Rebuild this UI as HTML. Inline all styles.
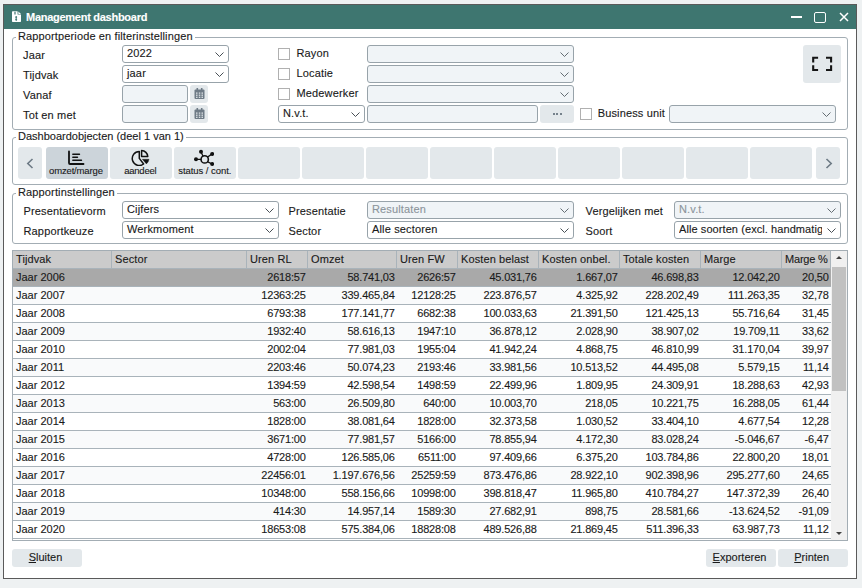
<!DOCTYPE html>
<html><head><meta charset="utf-8"><style>
html,body{margin:0;padding:0;width:862px;height:588px;overflow:hidden;background:#eef1f2}
body{position:relative;font-family:"Liberation Sans", sans-serif}
body>div{position:absolute}
.t{white-space:nowrap;-webkit-text-stroke:0.12px currentColor}
u{text-decoration:underline;text-underline-offset:1px}
</style></head><body>
<div style="left:0;top:0;width:862px;height:588px;background:#eef1f2"></div>
<div style="left:3px;top:4px;width:854px;height:575px;box-sizing:border-box;border:1px solid #5a5a5a;background:#fff"></div>
<div style="left:4px;top:5px;width:852px;height:24px;background:#3e7670"></div>
<svg width="10" height="12" viewBox="0 0 10 12" style="position:absolute;left:12px;top:11px"><path d="M0 1 Q0 0.3 0.7 0.3 L5.6 0.3 L5.6 3.5 L9 3.5 L9 10.2 Q9 10.9 8.3 10.9 L0.7 10.9 Q0 10.9 0 10.2 Z" fill="#fff"/><path d="M6.4 0.4 L9 3 L6.4 3 Z" fill="#fff"/><path d="M3 0.8 V3.6" stroke="#3e7670" stroke-width="1.2" fill="none"/><path d="M4.2 5 V10 M3.3 6.2 H5.1 M3.3 8.4 H5.1" stroke="#3e7670" stroke-width="1" fill="none"/></svg>
<div class="t" style="left:26px;top:11.19px;font-size:11px;line-height:13px;color:#ffffff;font-weight:bold;letter-spacing:-0.27px">Management dashboard</div>
<div style="left:791px;top:16.4px;width:10.5px;height:1.5px;background:#fff"></div>
<div style="left:814px;top:12px;width:12px;height:11px;box-sizing:border-box;border:1.5px solid #fff;border-radius:2px"></div>
<svg width="10" height="10" viewBox="0 0 10 10" style="position:absolute;left:839px;top:12px"><path d="M1 1 L9 9 M9 1 L1 9" stroke="#fff" stroke-width="1.5"/></svg>
<div style="left:12px;top:37px;width:836px;height:93px;box-sizing:border-box;border:1px solid #a3adb4;border-radius:3px"></div>
<div style="left:16px;top:36px;width:179px;height:3px;background:#fff"></div>
<div class="t" style="left:18px;top:29.69px;font-size:11px;line-height:13px;color:#1a1a1a;letter-spacing:0.13px">Rapportperiode en filterinstellingen</div>
<div class="t" style="left:23px;top:48.69px;font-size:11px;line-height:13px;color:#1a1a1a;letter-spacing:0.15px;">Jaar</div>
<div class="t" style="left:23px;top:68.69px;font-size:11px;line-height:13px;color:#1a1a1a;letter-spacing:0.15px;">Tijdvak</div>
<div class="t" style="left:23px;top:88.69px;font-size:11px;line-height:13px;color:#1a1a1a;letter-spacing:0.15px;">Vanaf</div>
<div class="t" style="left:23px;top:108.69px;font-size:11px;line-height:13px;color:#1a1a1a;letter-spacing:0.15px;">Tot en met</div>
<div style="left:122px;top:45px;width:107px;height:18px;box-sizing:border-box;border:1px solid #98a3aa;border-radius:3px;background:#ffffff"></div>
<svg width="9" height="5" viewBox="0 0 9 5" style="position:absolute;left:215px;top:52px"><path d="M0.5 0.5 L4.5 4.5 L8.5 0.5" fill="none" stroke="#474f55" stroke-width="1"/></svg>
<div class="t" style="left:127px;top:46.69px;font-size:11px;line-height:13px;color:#1a1a1a;letter-spacing:0.15px;">2022</div>
<div style="left:122px;top:65px;width:107px;height:18px;box-sizing:border-box;border:1px solid #98a3aa;border-radius:3px;background:#ffffff"></div>
<svg width="9" height="5" viewBox="0 0 9 5" style="position:absolute;left:215px;top:72px"><path d="M0.5 0.5 L4.5 4.5 L8.5 0.5" fill="none" stroke="#474f55" stroke-width="1"/></svg>
<div class="t" style="left:127px;top:66.69px;font-size:11px;line-height:13px;color:#1a1a1a;letter-spacing:0.15px;">jaar</div>
<div style="left:122px;top:85px;width:66px;height:18px;box-sizing:border-box;border:1px solid #98a3aa;border-radius:3px;background:#f0f4f7"></div>
<div style="left:190px;top:85px;width:18px;height:18px;background:#e3e8eb;border-radius:3px"></div>
<svg width="11" height="11" viewBox="0 0 11 11" style="position:absolute;left:194px;top:88px"><rect x="0.5" y="1.5" width="10" height="9.5" rx="1" fill="#6e7b86"/><rect x="2.5" y="0" width="1.6" height="3" fill="#6e7b86"/><rect x="6.9" y="0" width="1.6" height="3" fill="#6e7b86"/><g fill="#e3e8eb"><rect x="2" y="4.5" width="1.5" height="1.2"/><rect x="4.8" y="4.5" width="1.5" height="1.2"/><rect x="7.5" y="4.5" width="1.5" height="1.2"/><rect x="2" y="6.6" width="1.5" height="1.2"/><rect x="4.8" y="6.6" width="1.5" height="1.2"/><rect x="7.5" y="6.6" width="1.5" height="1.2"/><rect x="2" y="8.7" width="1.5" height="1.2"/><rect x="4.8" y="8.7" width="1.5" height="1.2"/><rect x="7.5" y="8.7" width="1.5" height="1.2"/></g></svg>
<div style="left:122px;top:105px;width:66px;height:18px;box-sizing:border-box;border:1px solid #98a3aa;border-radius:3px;background:#f0f4f7"></div>
<div style="left:190px;top:105px;width:18px;height:18px;background:#e3e8eb;border-radius:3px"></div>
<svg width="11" height="11" viewBox="0 0 11 11" style="position:absolute;left:194px;top:108px"><rect x="0.5" y="1.5" width="10" height="9.5" rx="1" fill="#6e7b86"/><rect x="2.5" y="0" width="1.6" height="3" fill="#6e7b86"/><rect x="6.9" y="0" width="1.6" height="3" fill="#6e7b86"/><g fill="#e3e8eb"><rect x="2" y="4.5" width="1.5" height="1.2"/><rect x="4.8" y="4.5" width="1.5" height="1.2"/><rect x="7.5" y="4.5" width="1.5" height="1.2"/><rect x="2" y="6.6" width="1.5" height="1.2"/><rect x="4.8" y="6.6" width="1.5" height="1.2"/><rect x="7.5" y="6.6" width="1.5" height="1.2"/><rect x="2" y="8.7" width="1.5" height="1.2"/><rect x="4.8" y="8.7" width="1.5" height="1.2"/><rect x="7.5" y="8.7" width="1.5" height="1.2"/></g></svg>
<div style="left:278px;top:48px;width:12px;height:12px;box-sizing:border-box;border:1px solid #b0b0b0;background:#fff"></div>
<div class="t" style="left:296.5px;top:46.69px;font-size:11px;line-height:13px;color:#1a1a1a;letter-spacing:0.15px;">Rayon</div>
<div style="left:367px;top:45px;width:207px;height:18px;box-sizing:border-box;border:1px solid #98a3aa;border-radius:3px;background:#f0f4f7"></div>
<svg width="9" height="5" viewBox="0 0 9 5" style="position:absolute;left:560px;top:52px"><path d="M0.5 0.5 L4.5 4.5 L8.5 0.5" fill="none" stroke="#646d73" stroke-width="1"/></svg>
<div style="left:278px;top:68px;width:12px;height:12px;box-sizing:border-box;border:1px solid #b0b0b0;background:#fff"></div>
<div class="t" style="left:296.5px;top:66.69px;font-size:11px;line-height:13px;color:#1a1a1a;letter-spacing:0.15px;">Locatie</div>
<div style="left:367px;top:65px;width:207px;height:18px;box-sizing:border-box;border:1px solid #98a3aa;border-radius:3px;background:#f0f4f7"></div>
<svg width="9" height="5" viewBox="0 0 9 5" style="position:absolute;left:560px;top:72px"><path d="M0.5 0.5 L4.5 4.5 L8.5 0.5" fill="none" stroke="#646d73" stroke-width="1"/></svg>
<div style="left:278px;top:88px;width:12px;height:12px;box-sizing:border-box;border:1px solid #b0b0b0;background:#fff"></div>
<div class="t" style="left:296.5px;top:86.69px;font-size:11px;line-height:13px;color:#1a1a1a;letter-spacing:0.15px;">Medewerker</div>
<div style="left:367px;top:85px;width:207px;height:18px;box-sizing:border-box;border:1px solid #98a3aa;border-radius:3px;background:#f0f4f7"></div>
<svg width="9" height="5" viewBox="0 0 9 5" style="position:absolute;left:560px;top:92px"><path d="M0.5 0.5 L4.5 4.5 L8.5 0.5" fill="none" stroke="#646d73" stroke-width="1"/></svg>
<div style="left:278px;top:105px;width:87px;height:18px;box-sizing:border-box;border:1px solid #98a3aa;border-radius:3px;background:#ffffff"></div>
<svg width="9" height="5" viewBox="0 0 9 5" style="position:absolute;left:351px;top:112px"><path d="M0.5 0.5 L4.5 4.5 L8.5 0.5" fill="none" stroke="#474f55" stroke-width="1"/></svg>
<div class="t" style="left:283px;top:106.69px;font-size:11px;line-height:13px;color:#1a1a1a;letter-spacing:0.15px;">N.v.t.</div>
<div style="left:367px;top:105px;width:171px;height:18px;box-sizing:border-box;border:1px solid #98a3aa;border-radius:3px;background:#f0f4f7"></div>
<div style="left:540px;top:105px;width:34px;height:18px;background:#e3e8eb;border-radius:3px"></div>
<div style="left:552.8px;top:112.8px;width:2px;height:2px;background:#75818b"></div><div style="left:556.3px;top:112.8px;width:2px;height:2px;background:#75818b"></div><div style="left:559.9px;top:112.8px;width:2px;height:2px;background:#75818b"></div>
<div style="left:580px;top:108px;width:12px;height:12px;box-sizing:border-box;border:1px solid #b0b0b0;background:#fff"></div>
<div class="t" style="left:597.7px;top:106.69px;font-size:11px;line-height:13px;color:#1a1a1a;letter-spacing:0.15px;">Business unit</div>
<div style="left:669px;top:105px;width:167px;height:18px;box-sizing:border-box;border:1px solid #98a3aa;border-radius:3px;background:#f0f4f7"></div>
<svg width="9" height="5" viewBox="0 0 9 5" style="position:absolute;left:822px;top:112px"><path d="M0.5 0.5 L4.5 4.5 L8.5 0.5" fill="none" stroke="#646d73" stroke-width="1"/></svg>
<div style="left:803px;top:45px;width:38px;height:38px;background:#e3e8eb;border-radius:3px"></div>
<svg width="30" height="22" viewBox="806 52 30 22" style="position:absolute;left:806px;top:52px"><path d="M813.2 62.6 V57.7 H818.1 M826 57.7 H831.1 V62.6 M813.2 65.2 V70 H818.1 M826 70 H831.1 V65.2" fill="none" stroke="#151515" stroke-width="2.1" stroke-linecap="butt" stroke-linejoin="miter"/></svg>
<div style="left:12px;top:137px;width:836px;height:48px;box-sizing:border-box;border:1px solid #a3adb4;border-radius:3px"></div>
<div style="left:16px;top:136px;width:170px;height:3px;background:#fff"></div>
<div class="t" style="left:18px;top:129.69px;font-size:11px;line-height:13px;color:#1a1a1a;letter-spacing:0px">Dashboardobjecten (deel 1 van 1)</div>
<div style="left:18px;top:147px;width:24px;height:32px;background:#e3e8eb;border-radius:3px"></div>
<svg width="8" height="11" viewBox="0 0 8 11" style="position:absolute;left:26px;top:157.6px"><path d="M6.5 1 L1.8 5.5 L6.5 10" fill="none" stroke="#6d7a85" stroke-width="1.6"/></svg>
<div style="left:46px;top:147px;width:62px;height:32px;background:#ccd4da;border-radius:3px"></div>
<div style="left:110px;top:147px;width:62px;height:32px;background:#e3e8eb;border-radius:3px"></div>
<div style="left:174px;top:147px;width:62px;height:32px;background:#e3e8eb;border-radius:3px"></div>
<div style="left:238px;top:147px;width:62px;height:32px;background:#e3e8eb;border-radius:3px"></div>
<div style="left:302px;top:147px;width:62px;height:32px;background:#e3e8eb;border-radius:3px"></div>
<div style="left:366px;top:147px;width:62px;height:32px;background:#e3e8eb;border-radius:3px"></div>
<div style="left:430px;top:147px;width:62px;height:32px;background:#e3e8eb;border-radius:3px"></div>
<div style="left:494px;top:147px;width:62px;height:32px;background:#e3e8eb;border-radius:3px"></div>
<div style="left:558px;top:147px;width:62px;height:32px;background:#e3e8eb;border-radius:3px"></div>
<div style="left:622px;top:147px;width:62px;height:32px;background:#e3e8eb;border-radius:3px"></div>
<div style="left:686px;top:147px;width:62px;height:32px;background:#e3e8eb;border-radius:3px"></div>
<div style="left:750px;top:147px;width:62px;height:32px;background:#e3e8eb;border-radius:3px"></div>
<div style="left:816px;top:147px;width:24px;height:32px;background:#e3e8eb;border-radius:3px"></div>
<svg width="8" height="11" viewBox="0 0 8 11" style="position:absolute;left:825px;top:157.6px"><path d="M1.5 1 L6.2 5.5 L1.5 10" fill="none" stroke="#6d7a85" stroke-width="1.6"/></svg>
<svg width="20" height="18" viewBox="0 0 20 18" style="position:absolute;left:66px;top:149px"><path d="M3 2.5 V14 Q3 15 4 15 H17.5" fill="none" stroke="#111" stroke-width="1.8" stroke-linecap="round"/><path d="M6.8 5.3 H13.5 M6.8 8.2 H11.5 M6.8 11.2 H15.5" fill="none" stroke="#111" stroke-width="1.4" stroke-linecap="round"/></svg>
<svg width="20" height="18" viewBox="0 0 20 18" style="position:absolute;left:130px;top:148px"><path d="M9.3 3.5 A7 7 0 1 0 13.6 16 L9.3 10.4 Z" fill="none" stroke="#111" stroke-width="1.5" stroke-linejoin="round"/><path d="M11.6 2.6 A6.3 6.3 0 0 1 17.8 8.6 L11.6 8.6 Z" fill="none" stroke="#111" stroke-width="1.5" stroke-linejoin="round"/><path d="M12.3 11.2 L19.1 11.2 Q18.7 14 16.4 15.9 Z" fill="#111" stroke="#111" stroke-width="0.3" stroke-linejoin="round"/></svg>
<svg width="22" height="18" viewBox="0 0 22 18" style="position:absolute;left:192px;top:148px"><circle cx="12.7" cy="11.4" r="3.65" fill="none" stroke="#111" stroke-width="1.6"/><path d="M4 11.3 H9.3 M9 3.8 L11 8.3 M20.1 5.9 L15.3 9.3 M20.1 16 L15.3 13.7" stroke="#111" stroke-width="1.3"/><circle cx="4" cy="11.3" r="2" fill="#111"/><circle cx="9" cy="3.8" r="2" fill="#111"/><circle cx="20.1" cy="5.9" r="2" fill="#111"/><circle cx="20.1" cy="16" r="2" fill="#111"/></svg>
<div class="t" style="left:-24.099999999999994px;width:200px;top:165.21px;font-size:9.5px;line-height:11px;color:#1a1a1a;text-align:center;letter-spacing:-0.15px">omzet/marge</div>
<div class="t" style="left:40.30000000000001px;width:200px;top:165.21px;font-size:9.5px;line-height:11px;color:#1a1a1a;text-align:center;letter-spacing:-0.25px">aandeel</div>
<div class="t" style="left:104.80000000000001px;width:200px;top:165.21px;font-size:9.5px;line-height:11px;color:#1a1a1a;text-align:center;letter-spacing:-0.05px">status / cont.</div>
<div style="left:12px;top:193px;width:836px;height:51px;box-sizing:border-box;border:1px solid #a3adb4;border-radius:3px"></div>
<div style="left:16px;top:192px;width:101px;height:3px;background:#fff"></div>
<div class="t" style="left:18px;top:185.69px;font-size:11px;line-height:13px;color:#1a1a1a;letter-spacing:0.14px">Rapportinstellingen</div>
<div class="t" style="left:23.5px;top:204.69px;font-size:11px;line-height:13px;color:#1a1a1a;letter-spacing:0.15px;">Presentatievorm</div>
<div class="t" style="left:23.5px;top:224.69px;font-size:11px;line-height:13px;color:#1a1a1a;letter-spacing:0.15px;">Rapportkeuze</div>
<div style="left:122px;top:201px;width:157px;height:18px;box-sizing:border-box;border:1px solid #98a3aa;border-radius:3px;background:#ffffff"></div>
<svg width="9" height="5" viewBox="0 0 9 5" style="position:absolute;left:265px;top:208px"><path d="M0.5 0.5 L4.5 4.5 L8.5 0.5" fill="none" stroke="#474f55" stroke-width="1"/></svg>
<div class="t" style="left:127px;top:202.69px;font-size:11px;line-height:13px;color:#1a1a1a;letter-spacing:0.15px;">Cijfers</div>
<div style="left:122px;top:221px;width:157px;height:18px;box-sizing:border-box;border:1px solid #98a3aa;border-radius:3px;background:#ffffff"></div>
<svg width="9" height="5" viewBox="0 0 9 5" style="position:absolute;left:265px;top:228px"><path d="M0.5 0.5 L4.5 4.5 L8.5 0.5" fill="none" stroke="#474f55" stroke-width="1"/></svg>
<div class="t" style="left:127px;top:222.69px;font-size:11px;line-height:13px;color:#1a1a1a;letter-spacing:0.15px;">Werkmoment</div>
<div class="t" style="left:288.5px;top:204.69px;font-size:11px;line-height:13px;color:#1a1a1a;letter-spacing:0.15px;">Presentatie</div>
<div class="t" style="left:288.5px;top:224.69px;font-size:11px;line-height:13px;color:#1a1a1a;letter-spacing:0.15px;">Sector</div>
<div style="left:367px;top:201px;width:207px;height:18px;box-sizing:border-box;border:1px solid #98a3aa;border-radius:3px;background:#f0f4f7"></div>
<svg width="9" height="5" viewBox="0 0 9 5" style="position:absolute;left:560px;top:208px"><path d="M0.5 0.5 L4.5 4.5 L8.5 0.5" fill="none" stroke="#646d73" stroke-width="1"/></svg>
<div class="t" style="left:372px;top:202.69px;font-size:11px;line-height:13px;color:#8c959c;letter-spacing:0.15px;">Resultaten</div>
<div style="left:367px;top:221px;width:207px;height:18px;box-sizing:border-box;border:1px solid #98a3aa;border-radius:3px;background:#ffffff"></div>
<svg width="9" height="5" viewBox="0 0 9 5" style="position:absolute;left:560px;top:228px"><path d="M0.5 0.5 L4.5 4.5 L8.5 0.5" fill="none" stroke="#474f55" stroke-width="1"/></svg>
<div class="t" style="left:372px;top:222.69px;font-size:11px;line-height:13px;color:#1a1a1a;letter-spacing:0.15px;">Alle sectoren</div>
<div class="t" style="left:585.5px;top:204.69px;font-size:11px;line-height:13px;color:#1a1a1a;letter-spacing:0.15px;">Vergelijken met</div>
<div class="t" style="left:585.5px;top:224.69px;font-size:11px;line-height:13px;color:#1a1a1a;letter-spacing:0.15px;">Soort</div>
<div style="left:674px;top:201px;width:167px;height:18px;box-sizing:border-box;border:1px solid #98a3aa;border-radius:3px;background:#f0f4f7"></div>
<svg width="9" height="5" viewBox="0 0 9 5" style="position:absolute;left:827px;top:208px"><path d="M0.5 0.5 L4.5 4.5 L8.5 0.5" fill="none" stroke="#646d73" stroke-width="1"/></svg>
<div class="t" style="left:679px;top:202.69px;font-size:11px;line-height:13px;color:#8c959c;letter-spacing:0.15px;">N.v.t.</div>
<div style="left:674px;top:221px;width:167px;height:18px;box-sizing:border-box;border:1px solid #98a3aa;border-radius:3px;background:#fff"></div>
<div class="t" style="left:679px;top:222.69px;width:143px;overflow:hidden;white-space:nowrap;font-size:11px;line-height:13px;color:#1a1a1a;letter-spacing:0.08px">Alle soorten (excl. handmatig</div>
<svg width="9" height="5" viewBox="0 0 9 5" style="position:absolute;left:827px;top:228px"><path d="M0.5 0.5 L4.5 4.5 L8.5 0.5" fill="none" stroke="#474f55" stroke-width="1"/></svg>
<div style="left:12px;top:250px;width:836px;height:291px;box-sizing:border-box;border:1px solid #a3adb4;background:#fff"></div>
<div style="left:13px;top:251px;width:818px;height:17px;background:#cbcbcb"></div>
<div style="left:111px;top:251px;width:1px;height:17px;background:#a9b3ba"></div>
<div style="left:246px;top:251px;width:1px;height:17px;background:#a9b3ba"></div>
<div style="left:307px;top:251px;width:1px;height:17px;background:#a9b3ba"></div>
<div style="left:396px;top:251px;width:1px;height:17px;background:#a9b3ba"></div>
<div style="left:457px;top:251px;width:1px;height:17px;background:#a9b3ba"></div>
<div style="left:538px;top:251px;width:1px;height:17px;background:#a9b3ba"></div>
<div style="left:619px;top:251px;width:1px;height:17px;background:#a9b3ba"></div>
<div style="left:700px;top:251px;width:1px;height:17px;background:#a9b3ba"></div>
<div style="left:781px;top:251px;width:1px;height:17px;background:#a9b3ba"></div>
<div style="left:830px;top:251px;width:1px;height:17px;background:#a9b3ba"></div>
<div style="left:13px;top:268px;width:818px;height:1px;background:#a9b3ba"></div>
<div class="t" style="left:16px;top:252.69px;font-size:11px;line-height:13px;color:#1a1a1a;letter-spacing:0.1px">Tijdvak</div>
<div class="t" style="left:115px;top:252.69px;font-size:11px;line-height:13px;color:#1a1a1a;letter-spacing:0.1px">Sector</div>
<div class="t" style="left:250px;top:252.69px;font-size:11px;line-height:13px;color:#1a1a1a;letter-spacing:0.1px">Uren RL</div>
<div class="t" style="left:311px;top:252.69px;font-size:11px;line-height:13px;color:#1a1a1a;letter-spacing:0.1px">Omzet</div>
<div class="t" style="left:400px;top:252.69px;font-size:11px;line-height:13px;color:#1a1a1a;letter-spacing:0.1px">Uren FW</div>
<div class="t" style="left:461px;top:252.69px;font-size:11px;line-height:13px;color:#1a1a1a;letter-spacing:0.1px">Kosten belast</div>
<div class="t" style="left:542px;top:252.69px;font-size:11px;line-height:13px;color:#1a1a1a;letter-spacing:0.1px">Kosten onbel.</div>
<div class="t" style="left:623px;top:252.69px;font-size:11px;line-height:13px;color:#1a1a1a;letter-spacing:0.1px">Totale kosten</div>
<div class="t" style="left:704px;top:252.69px;font-size:11px;line-height:13px;color:#1a1a1a;letter-spacing:0.1px">Marge</div>
<div class="t" style="left:785px;top:252.69px;font-size:11px;line-height:13px;color:#1a1a1a;letter-spacing:-0.2px">Marge %</div>
<div style="left:13px;top:269px;width:818px;height:17px;background:#a9a9a9"></div>
<div style="left:13px;top:286px;width:818px;height:1px;background:#a9b3ba"></div>
<div class="t" style="left:16px;top:270.69px;font-size:11px;line-height:13px;color:#1a1a1a;letter-spacing:0px">Jaar 2006</div>
<div class="t" style="right:556.3px;top:270.69px;font-size:11px;line-height:13px;color:#1a1a1a;text-align:right;letter-spacing:-0.18px">2618:57</div>
<div class="t" style="right:467.3px;top:270.69px;font-size:11px;line-height:13px;color:#1a1a1a;text-align:right;letter-spacing:-0.18px">58.741,03</div>
<div class="t" style="right:406.3px;top:270.69px;font-size:11px;line-height:13px;color:#1a1a1a;text-align:right;letter-spacing:-0.18px">2626:57</div>
<div class="t" style="right:325.29999999999995px;top:270.69px;font-size:11px;line-height:13px;color:#1a1a1a;text-align:right;letter-spacing:-0.18px">45.031,76</div>
<div class="t" style="right:244.29999999999995px;top:270.69px;font-size:11px;line-height:13px;color:#1a1a1a;text-align:right;letter-spacing:-0.18px">1.667,07</div>
<div class="t" style="right:163.29999999999995px;top:270.69px;font-size:11px;line-height:13px;color:#1a1a1a;text-align:right;letter-spacing:-0.18px">46.698,83</div>
<div class="t" style="right:82.29999999999995px;top:270.69px;font-size:11px;line-height:13px;color:#1a1a1a;text-align:right;letter-spacing:-0.18px">12.042,20</div>
<div class="t" style="right:33.299999999999955px;top:270.69px;font-size:11px;line-height:13px;color:#1a1a1a;text-align:right;letter-spacing:-0.18px">20,50</div>
<div style="left:13px;top:287px;width:818px;height:17px;background:#f9fafb"></div>
<div style="left:13px;top:304px;width:818px;height:1px;background:#a9b3ba"></div>
<div class="t" style="left:16px;top:288.69px;font-size:11px;line-height:13px;color:#1a1a1a;letter-spacing:0px">Jaar 2007</div>
<div class="t" style="right:556.3px;top:288.69px;font-size:11px;line-height:13px;color:#1a1a1a;text-align:right;letter-spacing:-0.18px">12363:25</div>
<div class="t" style="right:467.3px;top:288.69px;font-size:11px;line-height:13px;color:#1a1a1a;text-align:right;letter-spacing:-0.18px">339.465,84</div>
<div class="t" style="right:406.3px;top:288.69px;font-size:11px;line-height:13px;color:#1a1a1a;text-align:right;letter-spacing:-0.18px">12128:25</div>
<div class="t" style="right:325.29999999999995px;top:288.69px;font-size:11px;line-height:13px;color:#1a1a1a;text-align:right;letter-spacing:-0.18px">223.876,57</div>
<div class="t" style="right:244.29999999999995px;top:288.69px;font-size:11px;line-height:13px;color:#1a1a1a;text-align:right;letter-spacing:-0.18px">4.325,92</div>
<div class="t" style="right:163.29999999999995px;top:288.69px;font-size:11px;line-height:13px;color:#1a1a1a;text-align:right;letter-spacing:-0.18px">228.202,49</div>
<div class="t" style="right:82.29999999999995px;top:288.69px;font-size:11px;line-height:13px;color:#1a1a1a;text-align:right;letter-spacing:-0.18px">111.263,35</div>
<div class="t" style="right:33.299999999999955px;top:288.69px;font-size:11px;line-height:13px;color:#1a1a1a;text-align:right;letter-spacing:-0.18px">32,78</div>
<div style="left:13px;top:305px;width:818px;height:17px;background:#ffffff"></div>
<div style="left:13px;top:322px;width:818px;height:1px;background:#a9b3ba"></div>
<div class="t" style="left:16px;top:306.69px;font-size:11px;line-height:13px;color:#1a1a1a;letter-spacing:0px">Jaar 2008</div>
<div class="t" style="right:556.3px;top:306.69px;font-size:11px;line-height:13px;color:#1a1a1a;text-align:right;letter-spacing:-0.18px">6793:38</div>
<div class="t" style="right:467.3px;top:306.69px;font-size:11px;line-height:13px;color:#1a1a1a;text-align:right;letter-spacing:-0.18px">177.141,77</div>
<div class="t" style="right:406.3px;top:306.69px;font-size:11px;line-height:13px;color:#1a1a1a;text-align:right;letter-spacing:-0.18px">6682:38</div>
<div class="t" style="right:325.29999999999995px;top:306.69px;font-size:11px;line-height:13px;color:#1a1a1a;text-align:right;letter-spacing:-0.18px">100.033,63</div>
<div class="t" style="right:244.29999999999995px;top:306.69px;font-size:11px;line-height:13px;color:#1a1a1a;text-align:right;letter-spacing:-0.18px">21.391,50</div>
<div class="t" style="right:163.29999999999995px;top:306.69px;font-size:11px;line-height:13px;color:#1a1a1a;text-align:right;letter-spacing:-0.18px">121.425,13</div>
<div class="t" style="right:82.29999999999995px;top:306.69px;font-size:11px;line-height:13px;color:#1a1a1a;text-align:right;letter-spacing:-0.18px">55.716,64</div>
<div class="t" style="right:33.299999999999955px;top:306.69px;font-size:11px;line-height:13px;color:#1a1a1a;text-align:right;letter-spacing:-0.18px">31,45</div>
<div style="left:13px;top:323px;width:818px;height:17px;background:#f9fafb"></div>
<div style="left:13px;top:340px;width:818px;height:1px;background:#a9b3ba"></div>
<div class="t" style="left:16px;top:324.69px;font-size:11px;line-height:13px;color:#1a1a1a;letter-spacing:0px">Jaar 2009</div>
<div class="t" style="right:556.3px;top:324.69px;font-size:11px;line-height:13px;color:#1a1a1a;text-align:right;letter-spacing:-0.18px">1932:40</div>
<div class="t" style="right:467.3px;top:324.69px;font-size:11px;line-height:13px;color:#1a1a1a;text-align:right;letter-spacing:-0.18px">58.616,13</div>
<div class="t" style="right:406.3px;top:324.69px;font-size:11px;line-height:13px;color:#1a1a1a;text-align:right;letter-spacing:-0.18px">1947:10</div>
<div class="t" style="right:325.29999999999995px;top:324.69px;font-size:11px;line-height:13px;color:#1a1a1a;text-align:right;letter-spacing:-0.18px">36.878,12</div>
<div class="t" style="right:244.29999999999995px;top:324.69px;font-size:11px;line-height:13px;color:#1a1a1a;text-align:right;letter-spacing:-0.18px">2.028,90</div>
<div class="t" style="right:163.29999999999995px;top:324.69px;font-size:11px;line-height:13px;color:#1a1a1a;text-align:right;letter-spacing:-0.18px">38.907,02</div>
<div class="t" style="right:82.29999999999995px;top:324.69px;font-size:11px;line-height:13px;color:#1a1a1a;text-align:right;letter-spacing:-0.18px">19.709,11</div>
<div class="t" style="right:33.299999999999955px;top:324.69px;font-size:11px;line-height:13px;color:#1a1a1a;text-align:right;letter-spacing:-0.18px">33,62</div>
<div style="left:13px;top:341px;width:818px;height:17px;background:#ffffff"></div>
<div style="left:13px;top:358px;width:818px;height:1px;background:#a9b3ba"></div>
<div class="t" style="left:16px;top:342.69px;font-size:11px;line-height:13px;color:#1a1a1a;letter-spacing:0px">Jaar 2010</div>
<div class="t" style="right:556.3px;top:342.69px;font-size:11px;line-height:13px;color:#1a1a1a;text-align:right;letter-spacing:-0.18px">2002:04</div>
<div class="t" style="right:467.3px;top:342.69px;font-size:11px;line-height:13px;color:#1a1a1a;text-align:right;letter-spacing:-0.18px">77.981,03</div>
<div class="t" style="right:406.3px;top:342.69px;font-size:11px;line-height:13px;color:#1a1a1a;text-align:right;letter-spacing:-0.18px">1955:04</div>
<div class="t" style="right:325.29999999999995px;top:342.69px;font-size:11px;line-height:13px;color:#1a1a1a;text-align:right;letter-spacing:-0.18px">41.942,24</div>
<div class="t" style="right:244.29999999999995px;top:342.69px;font-size:11px;line-height:13px;color:#1a1a1a;text-align:right;letter-spacing:-0.18px">4.868,75</div>
<div class="t" style="right:163.29999999999995px;top:342.69px;font-size:11px;line-height:13px;color:#1a1a1a;text-align:right;letter-spacing:-0.18px">46.810,99</div>
<div class="t" style="right:82.29999999999995px;top:342.69px;font-size:11px;line-height:13px;color:#1a1a1a;text-align:right;letter-spacing:-0.18px">31.170,04</div>
<div class="t" style="right:33.299999999999955px;top:342.69px;font-size:11px;line-height:13px;color:#1a1a1a;text-align:right;letter-spacing:-0.18px">39,97</div>
<div style="left:13px;top:359px;width:818px;height:17px;background:#f9fafb"></div>
<div style="left:13px;top:376px;width:818px;height:1px;background:#a9b3ba"></div>
<div class="t" style="left:16px;top:360.69px;font-size:11px;line-height:13px;color:#1a1a1a;letter-spacing:0px">Jaar 2011</div>
<div class="t" style="right:556.3px;top:360.69px;font-size:11px;line-height:13px;color:#1a1a1a;text-align:right;letter-spacing:-0.18px">2203:46</div>
<div class="t" style="right:467.3px;top:360.69px;font-size:11px;line-height:13px;color:#1a1a1a;text-align:right;letter-spacing:-0.18px">50.074,23</div>
<div class="t" style="right:406.3px;top:360.69px;font-size:11px;line-height:13px;color:#1a1a1a;text-align:right;letter-spacing:-0.18px">2193:46</div>
<div class="t" style="right:325.29999999999995px;top:360.69px;font-size:11px;line-height:13px;color:#1a1a1a;text-align:right;letter-spacing:-0.18px">33.981,56</div>
<div class="t" style="right:244.29999999999995px;top:360.69px;font-size:11px;line-height:13px;color:#1a1a1a;text-align:right;letter-spacing:-0.18px">10.513,52</div>
<div class="t" style="right:163.29999999999995px;top:360.69px;font-size:11px;line-height:13px;color:#1a1a1a;text-align:right;letter-spacing:-0.18px">44.495,08</div>
<div class="t" style="right:82.29999999999995px;top:360.69px;font-size:11px;line-height:13px;color:#1a1a1a;text-align:right;letter-spacing:-0.18px">5.579,15</div>
<div class="t" style="right:33.299999999999955px;top:360.69px;font-size:11px;line-height:13px;color:#1a1a1a;text-align:right;letter-spacing:-0.18px">11,14</div>
<div style="left:13px;top:377px;width:818px;height:17px;background:#ffffff"></div>
<div style="left:13px;top:394px;width:818px;height:1px;background:#a9b3ba"></div>
<div class="t" style="left:16px;top:378.69px;font-size:11px;line-height:13px;color:#1a1a1a;letter-spacing:0px">Jaar 2012</div>
<div class="t" style="right:556.3px;top:378.69px;font-size:11px;line-height:13px;color:#1a1a1a;text-align:right;letter-spacing:-0.18px">1394:59</div>
<div class="t" style="right:467.3px;top:378.69px;font-size:11px;line-height:13px;color:#1a1a1a;text-align:right;letter-spacing:-0.18px">42.598,54</div>
<div class="t" style="right:406.3px;top:378.69px;font-size:11px;line-height:13px;color:#1a1a1a;text-align:right;letter-spacing:-0.18px">1498:59</div>
<div class="t" style="right:325.29999999999995px;top:378.69px;font-size:11px;line-height:13px;color:#1a1a1a;text-align:right;letter-spacing:-0.18px">22.499,96</div>
<div class="t" style="right:244.29999999999995px;top:378.69px;font-size:11px;line-height:13px;color:#1a1a1a;text-align:right;letter-spacing:-0.18px">1.809,95</div>
<div class="t" style="right:163.29999999999995px;top:378.69px;font-size:11px;line-height:13px;color:#1a1a1a;text-align:right;letter-spacing:-0.18px">24.309,91</div>
<div class="t" style="right:82.29999999999995px;top:378.69px;font-size:11px;line-height:13px;color:#1a1a1a;text-align:right;letter-spacing:-0.18px">18.288,63</div>
<div class="t" style="right:33.299999999999955px;top:378.69px;font-size:11px;line-height:13px;color:#1a1a1a;text-align:right;letter-spacing:-0.18px">42,93</div>
<div style="left:13px;top:395px;width:818px;height:17px;background:#f9fafb"></div>
<div style="left:13px;top:412px;width:818px;height:1px;background:#a9b3ba"></div>
<div class="t" style="left:16px;top:396.69px;font-size:11px;line-height:13px;color:#1a1a1a;letter-spacing:0px">Jaar 2013</div>
<div class="t" style="right:556.3px;top:396.69px;font-size:11px;line-height:13px;color:#1a1a1a;text-align:right;letter-spacing:-0.18px">563:00</div>
<div class="t" style="right:467.3px;top:396.69px;font-size:11px;line-height:13px;color:#1a1a1a;text-align:right;letter-spacing:-0.18px">26.509,80</div>
<div class="t" style="right:406.3px;top:396.69px;font-size:11px;line-height:13px;color:#1a1a1a;text-align:right;letter-spacing:-0.18px">640:00</div>
<div class="t" style="right:325.29999999999995px;top:396.69px;font-size:11px;line-height:13px;color:#1a1a1a;text-align:right;letter-spacing:-0.18px">10.003,70</div>
<div class="t" style="right:244.29999999999995px;top:396.69px;font-size:11px;line-height:13px;color:#1a1a1a;text-align:right;letter-spacing:-0.18px">218,05</div>
<div class="t" style="right:163.29999999999995px;top:396.69px;font-size:11px;line-height:13px;color:#1a1a1a;text-align:right;letter-spacing:-0.18px">10.221,75</div>
<div class="t" style="right:82.29999999999995px;top:396.69px;font-size:11px;line-height:13px;color:#1a1a1a;text-align:right;letter-spacing:-0.18px">16.288,05</div>
<div class="t" style="right:33.299999999999955px;top:396.69px;font-size:11px;line-height:13px;color:#1a1a1a;text-align:right;letter-spacing:-0.18px">61,44</div>
<div style="left:13px;top:413px;width:818px;height:17px;background:#ffffff"></div>
<div style="left:13px;top:430px;width:818px;height:1px;background:#a9b3ba"></div>
<div class="t" style="left:16px;top:414.69px;font-size:11px;line-height:13px;color:#1a1a1a;letter-spacing:0px">Jaar 2014</div>
<div class="t" style="right:556.3px;top:414.69px;font-size:11px;line-height:13px;color:#1a1a1a;text-align:right;letter-spacing:-0.18px">1828:00</div>
<div class="t" style="right:467.3px;top:414.69px;font-size:11px;line-height:13px;color:#1a1a1a;text-align:right;letter-spacing:-0.18px">38.081,64</div>
<div class="t" style="right:406.3px;top:414.69px;font-size:11px;line-height:13px;color:#1a1a1a;text-align:right;letter-spacing:-0.18px">1828:00</div>
<div class="t" style="right:325.29999999999995px;top:414.69px;font-size:11px;line-height:13px;color:#1a1a1a;text-align:right;letter-spacing:-0.18px">32.373,58</div>
<div class="t" style="right:244.29999999999995px;top:414.69px;font-size:11px;line-height:13px;color:#1a1a1a;text-align:right;letter-spacing:-0.18px">1.030,52</div>
<div class="t" style="right:163.29999999999995px;top:414.69px;font-size:11px;line-height:13px;color:#1a1a1a;text-align:right;letter-spacing:-0.18px">33.404,10</div>
<div class="t" style="right:82.29999999999995px;top:414.69px;font-size:11px;line-height:13px;color:#1a1a1a;text-align:right;letter-spacing:-0.18px">4.677,54</div>
<div class="t" style="right:33.299999999999955px;top:414.69px;font-size:11px;line-height:13px;color:#1a1a1a;text-align:right;letter-spacing:-0.18px">12,28</div>
<div style="left:13px;top:431px;width:818px;height:17px;background:#f9fafb"></div>
<div style="left:13px;top:448px;width:818px;height:1px;background:#a9b3ba"></div>
<div class="t" style="left:16px;top:432.69px;font-size:11px;line-height:13px;color:#1a1a1a;letter-spacing:0px">Jaar 2015</div>
<div class="t" style="right:556.3px;top:432.69px;font-size:11px;line-height:13px;color:#1a1a1a;text-align:right;letter-spacing:-0.18px">3671:00</div>
<div class="t" style="right:467.3px;top:432.69px;font-size:11px;line-height:13px;color:#1a1a1a;text-align:right;letter-spacing:-0.18px">77.981,57</div>
<div class="t" style="right:406.3px;top:432.69px;font-size:11px;line-height:13px;color:#1a1a1a;text-align:right;letter-spacing:-0.18px">5166:00</div>
<div class="t" style="right:325.29999999999995px;top:432.69px;font-size:11px;line-height:13px;color:#1a1a1a;text-align:right;letter-spacing:-0.18px">78.855,94</div>
<div class="t" style="right:244.29999999999995px;top:432.69px;font-size:11px;line-height:13px;color:#1a1a1a;text-align:right;letter-spacing:-0.18px">4.172,30</div>
<div class="t" style="right:163.29999999999995px;top:432.69px;font-size:11px;line-height:13px;color:#1a1a1a;text-align:right;letter-spacing:-0.18px">83.028,24</div>
<div class="t" style="right:82.29999999999995px;top:432.69px;font-size:11px;line-height:13px;color:#1a1a1a;text-align:right;letter-spacing:-0.18px">-5.046,67</div>
<div class="t" style="right:33.299999999999955px;top:432.69px;font-size:11px;line-height:13px;color:#1a1a1a;text-align:right;letter-spacing:-0.18px">-6,47</div>
<div style="left:13px;top:449px;width:818px;height:17px;background:#ffffff"></div>
<div style="left:13px;top:466px;width:818px;height:1px;background:#a9b3ba"></div>
<div class="t" style="left:16px;top:450.69px;font-size:11px;line-height:13px;color:#1a1a1a;letter-spacing:0px">Jaar 2016</div>
<div class="t" style="right:556.3px;top:450.69px;font-size:11px;line-height:13px;color:#1a1a1a;text-align:right;letter-spacing:-0.18px">4728:00</div>
<div class="t" style="right:467.3px;top:450.69px;font-size:11px;line-height:13px;color:#1a1a1a;text-align:right;letter-spacing:-0.18px">126.585,06</div>
<div class="t" style="right:406.3px;top:450.69px;font-size:11px;line-height:13px;color:#1a1a1a;text-align:right;letter-spacing:-0.18px">6511:00</div>
<div class="t" style="right:325.29999999999995px;top:450.69px;font-size:11px;line-height:13px;color:#1a1a1a;text-align:right;letter-spacing:-0.18px">97.409,66</div>
<div class="t" style="right:244.29999999999995px;top:450.69px;font-size:11px;line-height:13px;color:#1a1a1a;text-align:right;letter-spacing:-0.18px">6.375,20</div>
<div class="t" style="right:163.29999999999995px;top:450.69px;font-size:11px;line-height:13px;color:#1a1a1a;text-align:right;letter-spacing:-0.18px">103.784,86</div>
<div class="t" style="right:82.29999999999995px;top:450.69px;font-size:11px;line-height:13px;color:#1a1a1a;text-align:right;letter-spacing:-0.18px">22.800,20</div>
<div class="t" style="right:33.299999999999955px;top:450.69px;font-size:11px;line-height:13px;color:#1a1a1a;text-align:right;letter-spacing:-0.18px">18,01</div>
<div style="left:13px;top:467px;width:818px;height:17px;background:#f9fafb"></div>
<div style="left:13px;top:484px;width:818px;height:1px;background:#a9b3ba"></div>
<div class="t" style="left:16px;top:468.69px;font-size:11px;line-height:13px;color:#1a1a1a;letter-spacing:0px">Jaar 2017</div>
<div class="t" style="right:556.3px;top:468.69px;font-size:11px;line-height:13px;color:#1a1a1a;text-align:right;letter-spacing:-0.18px">22456:01</div>
<div class="t" style="right:467.3px;top:468.69px;font-size:11px;line-height:13px;color:#1a1a1a;text-align:right;letter-spacing:-0.18px">1.197.676,56</div>
<div class="t" style="right:406.3px;top:468.69px;font-size:11px;line-height:13px;color:#1a1a1a;text-align:right;letter-spacing:-0.18px">25259:59</div>
<div class="t" style="right:325.29999999999995px;top:468.69px;font-size:11px;line-height:13px;color:#1a1a1a;text-align:right;letter-spacing:-0.18px">873.476,86</div>
<div class="t" style="right:244.29999999999995px;top:468.69px;font-size:11px;line-height:13px;color:#1a1a1a;text-align:right;letter-spacing:-0.18px">28.922,10</div>
<div class="t" style="right:163.29999999999995px;top:468.69px;font-size:11px;line-height:13px;color:#1a1a1a;text-align:right;letter-spacing:-0.18px">902.398,96</div>
<div class="t" style="right:82.29999999999995px;top:468.69px;font-size:11px;line-height:13px;color:#1a1a1a;text-align:right;letter-spacing:-0.18px">295.277,60</div>
<div class="t" style="right:33.299999999999955px;top:468.69px;font-size:11px;line-height:13px;color:#1a1a1a;text-align:right;letter-spacing:-0.18px">24,65</div>
<div style="left:13px;top:485px;width:818px;height:17px;background:#ffffff"></div>
<div style="left:13px;top:502px;width:818px;height:1px;background:#a9b3ba"></div>
<div class="t" style="left:16px;top:486.69px;font-size:11px;line-height:13px;color:#1a1a1a;letter-spacing:0px">Jaar 2018</div>
<div class="t" style="right:556.3px;top:486.69px;font-size:11px;line-height:13px;color:#1a1a1a;text-align:right;letter-spacing:-0.18px">10348:00</div>
<div class="t" style="right:467.3px;top:486.69px;font-size:11px;line-height:13px;color:#1a1a1a;text-align:right;letter-spacing:-0.18px">558.156,66</div>
<div class="t" style="right:406.3px;top:486.69px;font-size:11px;line-height:13px;color:#1a1a1a;text-align:right;letter-spacing:-0.18px">10998:00</div>
<div class="t" style="right:325.29999999999995px;top:486.69px;font-size:11px;line-height:13px;color:#1a1a1a;text-align:right;letter-spacing:-0.18px">398.818,47</div>
<div class="t" style="right:244.29999999999995px;top:486.69px;font-size:11px;line-height:13px;color:#1a1a1a;text-align:right;letter-spacing:-0.18px">11.965,80</div>
<div class="t" style="right:163.29999999999995px;top:486.69px;font-size:11px;line-height:13px;color:#1a1a1a;text-align:right;letter-spacing:-0.18px">410.784,27</div>
<div class="t" style="right:82.29999999999995px;top:486.69px;font-size:11px;line-height:13px;color:#1a1a1a;text-align:right;letter-spacing:-0.18px">147.372,39</div>
<div class="t" style="right:33.299999999999955px;top:486.69px;font-size:11px;line-height:13px;color:#1a1a1a;text-align:right;letter-spacing:-0.18px">26,40</div>
<div style="left:13px;top:503px;width:818px;height:17px;background:#f9fafb"></div>
<div style="left:13px;top:520px;width:818px;height:1px;background:#a9b3ba"></div>
<div class="t" style="left:16px;top:504.69px;font-size:11px;line-height:13px;color:#1a1a1a;letter-spacing:0px">Jaar 2019</div>
<div class="t" style="right:556.3px;top:504.69px;font-size:11px;line-height:13px;color:#1a1a1a;text-align:right;letter-spacing:-0.18px">414:30</div>
<div class="t" style="right:467.3px;top:504.69px;font-size:11px;line-height:13px;color:#1a1a1a;text-align:right;letter-spacing:-0.18px">14.957,14</div>
<div class="t" style="right:406.3px;top:504.69px;font-size:11px;line-height:13px;color:#1a1a1a;text-align:right;letter-spacing:-0.18px">1589:30</div>
<div class="t" style="right:325.29999999999995px;top:504.69px;font-size:11px;line-height:13px;color:#1a1a1a;text-align:right;letter-spacing:-0.18px">27.682,91</div>
<div class="t" style="right:244.29999999999995px;top:504.69px;font-size:11px;line-height:13px;color:#1a1a1a;text-align:right;letter-spacing:-0.18px">898,75</div>
<div class="t" style="right:163.29999999999995px;top:504.69px;font-size:11px;line-height:13px;color:#1a1a1a;text-align:right;letter-spacing:-0.18px">28.581,66</div>
<div class="t" style="right:82.29999999999995px;top:504.69px;font-size:11px;line-height:13px;color:#1a1a1a;text-align:right;letter-spacing:-0.18px">-13.624,52</div>
<div class="t" style="right:33.299999999999955px;top:504.69px;font-size:11px;line-height:13px;color:#1a1a1a;text-align:right;letter-spacing:-0.18px">-91,09</div>
<div style="left:13px;top:521px;width:818px;height:17px;background:#ffffff"></div>
<div style="left:13px;top:538px;width:818px;height:1px;background:#a9b3ba"></div>
<div class="t" style="left:16px;top:522.69px;font-size:11px;line-height:13px;color:#1a1a1a;letter-spacing:0px">Jaar 2020</div>
<div class="t" style="right:556.3px;top:522.69px;font-size:11px;line-height:13px;color:#1a1a1a;text-align:right;letter-spacing:-0.18px">18653:08</div>
<div class="t" style="right:467.3px;top:522.69px;font-size:11px;line-height:13px;color:#1a1a1a;text-align:right;letter-spacing:-0.18px">575.384,06</div>
<div class="t" style="right:406.3px;top:522.69px;font-size:11px;line-height:13px;color:#1a1a1a;text-align:right;letter-spacing:-0.18px">18828:08</div>
<div class="t" style="right:325.29999999999995px;top:522.69px;font-size:11px;line-height:13px;color:#1a1a1a;text-align:right;letter-spacing:-0.18px">489.526,88</div>
<div class="t" style="right:244.29999999999995px;top:522.69px;font-size:11px;line-height:13px;color:#1a1a1a;text-align:right;letter-spacing:-0.18px">21.869,45</div>
<div class="t" style="right:163.29999999999995px;top:522.69px;font-size:11px;line-height:13px;color:#1a1a1a;text-align:right;letter-spacing:-0.18px">511.396,33</div>
<div class="t" style="right:82.29999999999995px;top:522.69px;font-size:11px;line-height:13px;color:#1a1a1a;text-align:right;letter-spacing:-0.18px">63.987,73</div>
<div class="t" style="right:33.299999999999955px;top:522.69px;font-size:11px;line-height:13px;color:#1a1a1a;text-align:right;letter-spacing:-0.18px">11,12</div>
<div style="left:831px;top:251px;width:16px;height:289px;background:#f0f0f0"></div>
<div style="left:832px;top:267px;width:14px;height:124px;background:#c1c1c1"></div>
<svg width="6" height="3" viewBox="0 0 6 3" style="position:absolute;left:835.5px;top:256px"><path d="M0 3 L3 0 L6 3 Z" fill="#404040"/></svg>
<svg width="6" height="3" viewBox="0 0 6 3" style="position:absolute;left:835.5px;top:532px"><path d="M0 0 L3 3 L6 0 Z" fill="#404040"/></svg>
<div style="left:12px;top:549px;width:70px;height:18px;background:#e3e8eb;border-radius:3px"></div>
<div class="t" style="left:-54.5px;width:200px;top:550.69px;font-size:11px;line-height:13px;color:#1a1a1a;text-align:center;"><u>S</u>luiten</div>
<div style="left:706px;top:549px;width:70px;height:18px;background:#e3e8eb;border-radius:3px"></div>
<div class="t" style="left:639.5px;width:200px;top:550.69px;font-size:11px;line-height:13px;color:#1a1a1a;text-align:center;"><u>E</u>xporteren</div>
<div style="left:778px;top:549px;width:70px;height:18px;background:#e3e8eb;border-radius:3px"></div>
<div class="t" style="left:711.7px;width:200px;top:550.69px;font-size:11px;line-height:13px;color:#1a1a1a;text-align:center;"><u>P</u>rinten</div>
</body></html>
